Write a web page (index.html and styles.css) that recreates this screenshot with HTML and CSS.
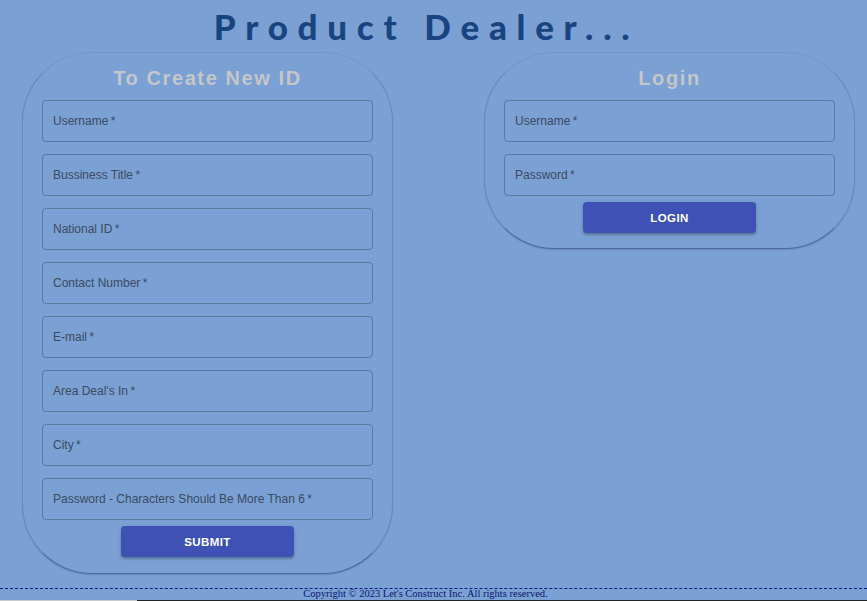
FILE: index.html
```html
<!DOCTYPE html>
<html>
<head>
<meta charset="utf-8">
<link rel="stylesheet" href="styles.css">
</head>
<body>
<div class="page">
  <h1 class="title">Product Dealer...</h1>
  <div class="columns">
    <div class="card card-left">
      <h2 class="card-title">To Create New ID</h2>
      <div class="field"><span class="label">Username&thinsp;*</span></div>
      <div class="field"><span class="label">Bussiness Title&thinsp;*</span></div>
      <div class="field"><span class="label">National ID&thinsp;*</span></div>
      <div class="field"><span class="label">Contact Number&thinsp;*</span></div>
      <div class="field"><span class="label">E-mail&thinsp;*</span></div>
      <div class="field"><span class="label">Area Deal's In&thinsp;*</span></div>
      <div class="field"><span class="label">City&thinsp;*</span></div>
      <div class="field"><span class="label">Password - Characters Should Be More Than 6&thinsp;*</span></div>
      <button class="btn">SUBMIT</button>
    </div>
    <div class="card card-right">
      <h2 class="card-title">Login</h2>
      <div class="field"><span class="label">Username&thinsp;*</span></div>
      <div class="field"><span class="label">Password&thinsp;*</span></div>
      <button class="btn">LOGIN</button>
    </div>
  </div>
  <footer class="footer">Copyright © 2023 Let's Construct Inc. All rights reserved.</footer>
  <div class="strip"><span class="strip-a"></span><span class="strip-b"></span></div>
</div>
</body>
</html>
```

FILE: styles.css
```css
html, body {
  margin: 0;
  padding: 0;
  background: #7aa0d4;
  overflow: hidden;
}
.page {
  width: 867px;
  height: 601px;
  display: flex;
  flex-direction: column;
}
.title {
  margin: 0;
  padding-top: 4px;
  height: 48px;
  text-align: center;
  font-family: "Lato", "Liberation Sans", sans-serif;
  font-weight: 900;
  font-size: 35px;
  line-height: 44px;
  letter-spacing: 9.7px;
  color: #1a4480;
  padding-right: 14px;
}
.columns {
  display: flex;
  align-items: flex-start;
  padding-left: 22px;
  gap: 91px;
}
.card {
  box-sizing: border-box;
  border: 1px solid rgba(60, 90, 140, 0.3);
  border-top-color: rgba(60, 90, 140, 0.12);
  border-bottom-color: rgba(40, 65, 110, 0.55);
  border-radius: 70px;
  box-shadow: 0 1px 1px rgba(30, 50, 90, 0.2);
  display: flex;
  flex-direction: column;
  align-items: center;
  padding: 0 0 16px;
}
.card-left { width: 371px; height: 522px; }
.card-right { width: 371px; height: 197px; }
.card-title {
  margin: 0;
  height: 47px;
  line-height: 50px;
  font-family: "Liberation Sans", Arial, sans-serif;
  font-weight: bold;
  font-size: 20px;
  letter-spacing: 1.6px;
  color: #c4c6c8;
}
.field {
  box-sizing: border-box;
  width: 331px;
  height: 42px;
  border: 1px solid rgba(0, 0, 0, 0.25);
  border-radius: 4px;
  margin-bottom: 12px;
  display: flex;
  align-items: center;
  padding-left: 10px;
  flex-shrink: 0;
}
.field:last-of-type { margin-bottom: 6px; }
.label {
  font-family: "Liberation Sans", Arial, sans-serif;
  font-size: 12px;
  color: #3c4a62;
}
.btn {
  width: 173px;
  height: 31px;
  border: none;
  border-radius: 4px;
  background: #3f51b5;
  color: #ffffff;
  font-family: "Liberation Sans", Arial, sans-serif;
  font-weight: bold;
  font-size: 11.5px;
  letter-spacing: 0.4px;
  box-shadow: 0 2px 2px rgba(0, 0, 0, 0.2), 0 1px 4px rgba(0, 0, 0, 0.12);
  padding: 0;
  flex-shrink: 0;
}
.footer {
  margin-top: auto;
  border-top: 1px dashed #0a1a80;
  height: 11px;
  line-height: 10px;
  font-family: "Liberation Serif", "Times New Roman", serif;
  font-size: 10.5px;
  color: #0a1670;
  text-align: center;
  padding-right: 16px;
}
.strip {
  display: flex;
  height: 1px;
}
.strip-a { width: 137px; background: #c8cacc; }
.strip-b { flex: 1; background: #222428; }
```
